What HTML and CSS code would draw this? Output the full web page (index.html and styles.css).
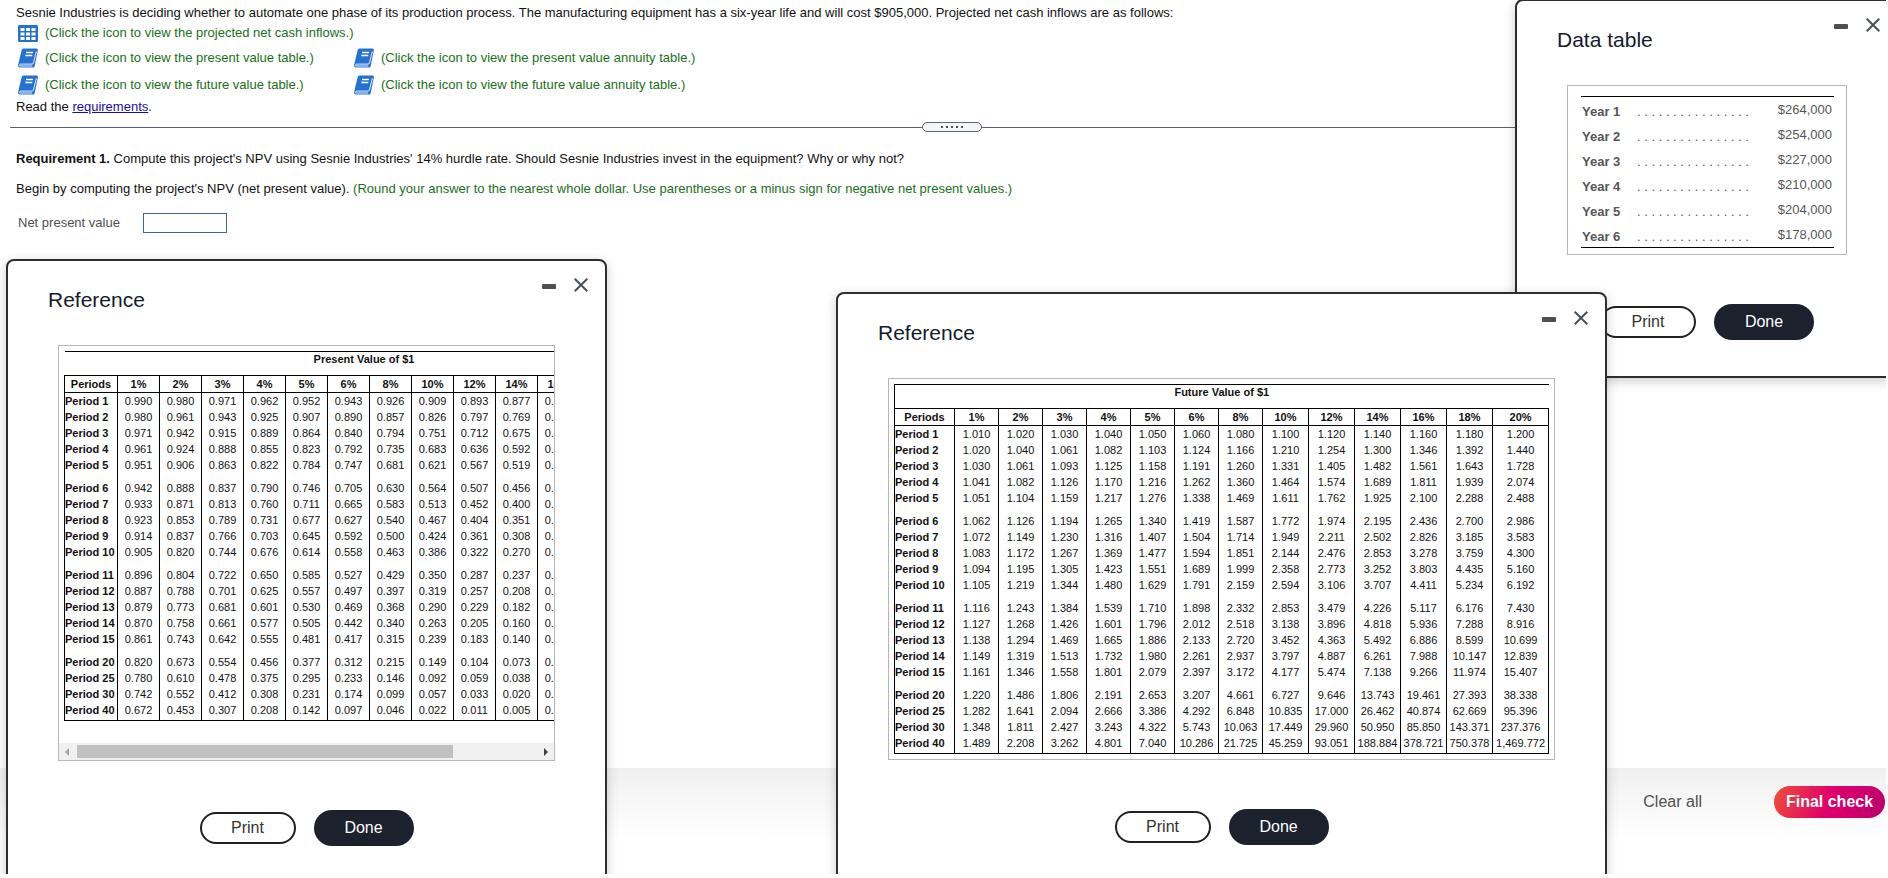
FILE: index.html
```
<!DOCTYPE html>
<html lang="en">
<head>
    <meta charset="UTF-8">
    <meta name="viewport" content="width=device-width, initial-scale=1.0">
    <title>Sesnie Industries</title>
    <link rel="stylesheet" href="styles.css">
</head>

<body>
    <svg class="defs" width="0" height="0">
        <symbol id="ico_grid" viewBox="0 0 20 17">
            <rect x="0" y="0" width="20" height="17" rx="1.5" fill="#2372d2"/>
            <path fill="#fff" d="M2.5 3h4v3h-4zM8 3h4v3H8zM13.500 3h4v3h-4zM2.500 7.500h4v3h-4zM8 7.500h4v3H8zM13.500 7.500h4v3h-4zM2.500 12h4v3h-4zM8 12h4v3H8zM13.500 12h4v3h-4z"/>
        </symbol>
        <symbol id="ico_book" viewBox="0 0 20 20">
            <path fill="#2372d2" d="M6 .5h12c1.500 0 2.100.8 1.800 2L16.700 18c-.2 1-.8 1.500-1.800 1.500H2C.6 19.500-.2 18.400.1 17L3.600 2.200C3.900 1 4.700.5 6 .5z"/>
            <path fill="none" stroke="#fff" stroke-width=".9" d="M18.300 3.500L15.400 15c-.2.800-.7 1.100-1.400 1.100H3.200c-1.500 0-2 .9-1.500 1.900h12.500"/>
            <path stroke="#fff" stroke-width="1.300" d="M8 4.500h7M7.300 7.500h7"/>
        </symbol>
        <symbol id="ico_close" viewBox="0 0 14 14">
            <path fill="none" stroke="#47505c" stroke-width="2" d="M.7.7l12.600 12.600M13.300.7L.7 13.300"/>
        </symbol>
    </svg>

    <div class="page">
        <main class="problem">
            <p class="line">Sesnie Industries is deciding whether to automate one phase of its production process. The manufacturing equipment has a six-year life and will cost $905,000. Projected net cash inflows are as follows:</p>
            <div class="links">
                <a class="ref wide" href="#data"><svg class="grid_icon"><use href="#ico_grid"/></svg>(Click the icon to view the projected net cash inflows.)</a>
                <a class="ref" href="#pv"><svg><use href="#ico_book"/></svg>(Click the icon to view the present value table.)</a>
                <a class="ref" href="#pva"><svg><use href="#ico_book"/></svg>(Click the icon to view the present value annuity table.)</a>
                <a class="ref" href="#fv"><svg><use href="#ico_book"/></svg>(Click the icon to view the future value table.)</a>
                <a class="ref" href="#fva"><svg><use href="#ico_book"/></svg>(Click the icon to view the future value annuity table.)</a>
            </div>
            <p class="line">Read the <a class="req" href="#requirements">requirements</a>.</p>
        </main>

        <div class="divider"><button class="grip" aria-label="Resize"><i></i><i></i><i></i><i></i><i></i></button></div>

        <section class="question">
            <p class="line"><b>Requirement 1.</b> Compute this project's NPV using Sesnie Industries' 14% hurdle rate. Should Sesnie Industries invest in the equipment? Why or why not?</p>
            <p class="line">Begin by computing the project's NPV (net present value). <span class="hint">(Round your answer to the nearest whole dollar. Use parentheses or a minus sign for negative net present values.)</span></p>
            <div class="answer">
                <label for="npv">Net present value</label>
                <input id="npv" type="text">
            </div>
        </section>

        <footer class="footer">
            <button class="clear">Clear all</button>
            <button class="final">Final check</button>
        </footer>

        <section class="dialog dialog_data" id="data">
            <header>
                <h2>Data table</h2>
                <button class="min" aria-label="Minimize"></button>
                <button class="close" aria-label="Close"><svg><use href="#ico_close"/></svg></button>
            </header>
            <div class="box box_data">
                <table class="flows">
                    <tr><th>Year 1</th><td>. . . . . . . . . . . . . . . .</td><td>$264,000</td></tr>
                    <tr><th>Year 2</th><td>. . . . . . . . . . . . . . . .</td><td>$254,000</td></tr>
                    <tr><th>Year 3</th><td>. . . . . . . . . . . . . . . .</td><td>$227,000</td></tr>
                    <tr><th>Year 4</th><td>. . . . . . . . . . . . . . . .</td><td>$210,000</td></tr>
                    <tr><th>Year 5</th><td>. . . . . . . . . . . . . . . .</td><td>$204,000</td></tr>
                    <tr><th>Year 6</th><td>. . . . . . . . . . . . . . . .</td><td>$178,000</td></tr>
                </table>
            </div>
            <div class="buttons">
                <button class="print">Print</button>
                <button class="done">Done</button>
            </div>
        </section>

        <section class="dialog dialog_pv" id="pv">
            <header>
                <h2>Reference</h2>
                <button class="min" aria-label="Minimize"></button>
                <button class="close" aria-label="Close"><svg><use href="#ico_close"/></svg></button>
            </header>
            <div class="box">
                <div class="clip">
                    <table class="factors pv" id="pv_table"></table>
                </div>
                <div class="scrollbar">
                    <span class="arrow_left"></span>
                    <div class="track"><div class="thumb"></div></div>
                    <span class="arrow_right"></span>
                </div>
            </div>
            <div class="buttons">
                <button class="print">Print</button>
                <button class="done">Done</button>
            </div>
        </section>

        <section class="dialog dialog_fv" id="fv">
            <header>
                <h2>Reference</h2>
                <button class="min" aria-label="Minimize"></button>
                <button class="close" aria-label="Close"><svg><use href="#ico_close"/></svg></button>
            </header>
            <div class="box">
                <div class="clip">
                    <table class="factors fv" id="fv_table"></table>
                </div>
            </div>
            <div class="buttons">
                <button class="print">Print</button>
                <button class="done">Done</button>
            </div>
        </section>
    </div>
    <script src="tables.js"></script>
</body>
</html>
```
FILE: styles.css
```
* {
    margin: 0;
    padding: 0;
    box-sizing: border-box;
}

body {
    background: #fff;
    color: #111;
    font-family: "Liberation Sans", Arial, Helvetica, sans-serif;
    font-size: 13px;
    line-height: 18px;
}

button {
    border: none;
    background: none;
    font-family: inherit;
    font-size: 16px;
    cursor: pointer;
}

.defs {
    position: absolute;
}

.page {
    position: relative;
    display: flex;
    flex-direction: column;
    height: calc(100vh - 4px);
    margin-right: 2px;
    overflow: hidden;
}

/* problem text */
.problem {
    padding: 4px 16px 0;
}

.links {
    display: grid;
    grid-template-columns: 336px 1fr;
    grid-template-rows: 22px 28px 26px;
    align-items: center;
    padding-left: 2px;
}

.ref {
    display: flex;
    align-items: center;
    gap: 7px;
    color: #1a701a;
    text-decoration: none;
}

.ref svg {
    width: 20px;
    height: 20px;
}

.ref .grid_icon {
    height: 17px;
}

.wide {
    grid-column: 1 / 3;
}

.req {
    color: #1a0dab;
}

.hint {
    color: #1a701a;
}

.divider {
    display: flex;
    justify-content: center;
    margin: 6px 0 0 10px;
    padding-left: 8px;
    background: linear-gradient(#56636f, #56636f) center / 100% 1px no-repeat;
}

.grip {
    display: flex;
    justify-content: center;
    align-items: center;
    gap: 3px;
    width: 60px;
    height: 10px;
    border: 1px solid #5d6773;
    border-radius: 5px;
    background: #f3f5f8;
}

.grip i {
    width: 2px;
    height: 2px;
    background: #47505c;
}

.question {
    display: flex;
    flex-direction: column;
    gap: 12px;
    padding: 18px 16px 0;
}

.answer {
    display: flex;
    align-items: center;
    gap: 23px;
    padding: 3px 0 0 2px;
    color: #505050;
}

.answer input {
    width: 84px;
    height: 20px;
    padding: 0 4px;
    border: 1px solid #3a659b;
    font-family: inherit;
    font-size: 13px;
}

.footer {
    display: flex;
    justify-content: flex-end;
    align-items: flex-start;
    gap: 72px;
    height: 106px;
    margin-top: auto;
    padding: 18px 1px 0;
    background: linear-gradient(#f0f0f0, #fff 70px);
}

.clear {
    height: 32px;
    color: #505050;
}

.final {
    width: 111px;
    height: 32px;
    border-radius: 16px;
    background: linear-gradient(110deg, #f04e37, #df006b 50%, #b9006f);
    color: #fff;
    font-weight: bold;
}

/* dialogs */
.dialog {
    position: absolute;
    padding: 0 50px 36px;
    border: 2px solid #2d2e30;
    border-radius: 8px;
    background: #fff;
    box-shadow: 0 3px 12px rgba(0, 0, 0, 0.2);
}

.dialog_data {
    top: -1px;
    right: -13px;
    width: 384px;
}

.dialog_pv {
    top: 259px;
    left: 6px;
    width: 601px;
}

.dialog_fv {
    top: 292px;
    left: 836px;
}

.dialog header {
    display: flex;
    gap: 18px;
    height: 84px;
    margin: 0 -33px 0 -10px;
    padding-top: 17px;
}

.dialog h2 {
    flex: 1;
    padding-top: 9px;
    color: #141b2c;
    font-size: 21px;
    font-weight: normal;
    line-height: 26px;
}

.min {
    width: 14px;
    height: 5px;
    margin-top: 6px;
    border-radius: 1px;
    background: #4d4f53;
}

.close {
    width: 14px;
    height: 14px;
}

.close svg {
    display: block;
    width: 14px;
    height: 14px;
}

.box {
    border: 1px solid #b5b8b8;
}

.buttons {
    display: flex;
    justify-content: center;
    align-items: center;
    gap: 18px;
    margin-top: 49px;
}

.print {
    width: 96px;
    height: 32px;
    border: 2px solid #202127;
    border-radius: 16px;
    background: #fff;
    color: #333;
}

.done {
    width: 100px;
    height: 36px;
    border-radius: 18px;
    background: #1b212d;
    color: #fff;
}

/* cash inflows */
.box_data {
    padding: 10px 12px 6px 13px;
}

.flows {
    width: 100%;
    border-top: 1px solid #000;
    border-bottom: 1px solid #000;
    border-spacing: 0;
    color: #55565a;
}

.flows th,
.flows td {
    height: 25px;
    padding: 5px 1px 0;
    line-height: 20px;
    text-align: left;
}

.flows th {
    width: 55px;
}

.flows td:last-child {
    padding: 3px 2px 2px;
    text-align: right;
}

/* factor tables */
.clip {
    padding: 5px;
    overflow-x: auto;
    scrollbar-width: none;
}

.dialog_pv .clip {
    padding: 5px 0 22px 5px;
}

.factors {
    border-collapse: collapse;
    table-layout: fixed;
    color: #111;
    font-size: 11px;
    line-height: 16px;
}

.pv {
    width: 599px;
}

.fv {
    width: 654px;
}

.pv .col_period {
    width: 53px;
}

.pv .col_rate {
    width: 42px;
}

.fv .col_period {
    width: 60px;
}

.fv .col_rate {
    width: 44px;
}

/* 10% and up hold longer numbers */
.fv .col_rate:nth-child(n+9) {
    width: 46px;
}

.fv .col_rate:last-child {
    width: 56px;
}

.factors td,
.factors th {
    border-left: 1px solid #000;
    border-right: 1px solid #000;
    text-align: center;
}

.factors .caption {
    height: 24px;
    border: none;
    border-top: 1px solid #000;
    line-height: 15px;
    vertical-align: top;
}

.fv .caption {
    border-left: 1px solid #000;
}

.factors .rates th {
    height: 17px;
    border-top: 1px solid #000;
    border-bottom: 1px solid #000;
}

.factors tbody th {
    text-align: left;
    white-space: nowrap;
}

.factors .gap th,
.factors .gap td {
    padding-top: 7px;
}

.factors tbody tr:last-child > * {
    padding-bottom: 2px;
    border-bottom: 1px solid #000;
}

/* scrollbar under the present value table */
.scrollbar {
    display: flex;
    align-items: center;
    gap: 8px;
    height: 17px;
    padding: 0 6px;
    background: #f0f0f0;
}

.track {
    flex: 1;
}

.thumb {
    width: 82%;
    height: 13px;
    background: #c1c1c1;
}

.arrow_left,
.arrow_right {
    border: 4px solid transparent;
}

.arrow_left {
    border-left: none;
    border-right-color: #a3a3a3;
}

.arrow_right {
    border-right: none;
    border-left-color: #404040;
}
```
FILE: tables.js
```
var rates = ["1%", "2%", "3%", "4%", "5%", "6%", "8%", "10%", "12%", "14%", "16%", "18%", "20%"];
var gaps = ["6", "11", "20"];

// period number first, then one factor per rate
var presentValues = `
1 0.990 0.980 0.971 0.962 0.952 0.943 0.926 0.909 0.893 0.877 0.862 0.847 0.833
2 0.980 0.961 0.943 0.925 0.907 0.890 0.857 0.826 0.797 0.769 0.743 0.718 0.694
3 0.971 0.942 0.915 0.889 0.864 0.840 0.794 0.751 0.712 0.675 0.641 0.609 0.579
4 0.961 0.924 0.888 0.855 0.823 0.792 0.735 0.683 0.636 0.592 0.552 0.516 0.482
5 0.951 0.906 0.863 0.822 0.784 0.747 0.681 0.621 0.567 0.519 0.476 0.437 0.402
6 0.942 0.888 0.837 0.790 0.746 0.705 0.630 0.564 0.507 0.456 0.410 0.370 0.335
7 0.933 0.871 0.813 0.760 0.711 0.665 0.583 0.513 0.452 0.400 0.354 0.314 0.279
8 0.923 0.853 0.789 0.731 0.677 0.627 0.540 0.467 0.404 0.351 0.305 0.266 0.233
9 0.914 0.837 0.766 0.703 0.645 0.592 0.500 0.424 0.361 0.308 0.263 0.225 0.194
10 0.905 0.820 0.744 0.676 0.614 0.558 0.463 0.386 0.322 0.270 0.227 0.191 0.162
11 0.896 0.804 0.722 0.650 0.585 0.527 0.429 0.350 0.287 0.237 0.195 0.162 0.135
12 0.887 0.788 0.701 0.625 0.557 0.497 0.397 0.319 0.257 0.208 0.168 0.137 0.112
13 0.879 0.773 0.681 0.601 0.530 0.469 0.368 0.290 0.229 0.182 0.145 0.116 0.093
14 0.870 0.758 0.661 0.577 0.505 0.442 0.340 0.263 0.205 0.160 0.125 0.099 0.078
15 0.861 0.743 0.642 0.555 0.481 0.417 0.315 0.239 0.183 0.140 0.108 0.084 0.065
20 0.820 0.673 0.554 0.456 0.377 0.312 0.215 0.149 0.104 0.073 0.051 0.037 0.026
25 0.780 0.610 0.478 0.375 0.295 0.233 0.146 0.092 0.059 0.038 0.024 0.016 0.010
30 0.742 0.552 0.412 0.308 0.231 0.174 0.099 0.057 0.033 0.020 0.012 0.007 0.004
40 0.672 0.453 0.307 0.208 0.142 0.097 0.046 0.022 0.011 0.005 0.003 0.001 0.001`;

var futureValues = `
1 1.010 1.020 1.030 1.040 1.050 1.060 1.080 1.100 1.120 1.140 1.160 1.180 1.200
2 1.020 1.040 1.061 1.082 1.103 1.124 1.166 1.210 1.254 1.300 1.346 1.392 1.440
3 1.030 1.061 1.093 1.125 1.158 1.191 1.260 1.331 1.405 1.482 1.561 1.643 1.728
4 1.041 1.082 1.126 1.170 1.216 1.262 1.360 1.464 1.574 1.689 1.811 1.939 2.074
5 1.051 1.104 1.159 1.217 1.276 1.338 1.469 1.611 1.762 1.925 2.100 2.288 2.488
6 1.062 1.126 1.194 1.265 1.340 1.419 1.587 1.772 1.974 2.195 2.436 2.700 2.986
7 1.072 1.149 1.230 1.316 1.407 1.504 1.714 1.949 2.211 2.502 2.826 3.185 3.583
8 1.083 1.172 1.267 1.369 1.477 1.594 1.851 2.144 2.476 2.853 3.278 3.759 4.300
9 1.094 1.195 1.305 1.423 1.551 1.689 1.999 2.358 2.773 3.252 3.803 4.435 5.160
10 1.105 1.219 1.344 1.480 1.629 1.791 2.159 2.594 3.106 3.707 4.411 5.234 6.192
11 1.116 1.243 1.384 1.539 1.710 1.898 2.332 2.853 3.479 4.226 5.117 6.176 7.430
12 1.127 1.268 1.426 1.601 1.796 2.012 2.518 3.138 3.896 4.818 5.936 7.288 8.916
13 1.138 1.294 1.469 1.665 1.886 2.133 2.720 3.452 4.363 5.492 6.886 8.599 10.699
14 1.149 1.319 1.513 1.732 1.980 2.261 2.937 3.797 4.887 6.261 7.988 10.147 12.839
15 1.161 1.346 1.558 1.801 2.079 2.397 3.172 4.177 5.474 7.138 9.266 11.974 15.407
20 1.220 1.486 1.806 2.191 2.653 3.207 4.661 6.727 9.646 13.743 19.461 27.393 38.338
25 1.282 1.641 2.094 2.666 3.386 4.292 6.848 10.835 17.000 26.462 40.874 62.669 95.396
30 1.348 1.811 2.427 3.243 4.322 5.743 10.063 17.449 29.960 50.950 85.850 143.371 237.376
40 1.489 2.208 3.262 4.801 7.040 10.286 21.725 45.259 93.051 188.884 378.721 750.378 1,469.772`;

function fillTable(id, title, data)
{
    var html = '<colgroup><col class="col_period">' + rates.map(() => '<col class="col_rate">').join("") + '</colgroup>';
    html += '<thead><tr><th class="caption" colspan="14">' + title + '</th></tr>';
    html += '<tr class="rates"><th>Periods</th>' + rates.map(r => '<th>' + r + '</th>').join("") + '</tr></thead><tbody>';
    data.trim().split("\n").forEach(line =>
    {
        var cells = line.split(" ");
        var period = cells.shift();
        html += gaps.includes(period) ? '<tr class="gap">' : '<tr>';
        html += '<th>Period ' + period + '</th>' + cells.map(c => '<td>' + c + '</td>').join("") + '</tr>';
    });
    document.getElementById(id).innerHTML = html + '</tbody>';
}

fillTable("pv_table", "Present Value of $1", presentValues);
fillTable("fv_table", "Future Value of $1", futureValues);
```
